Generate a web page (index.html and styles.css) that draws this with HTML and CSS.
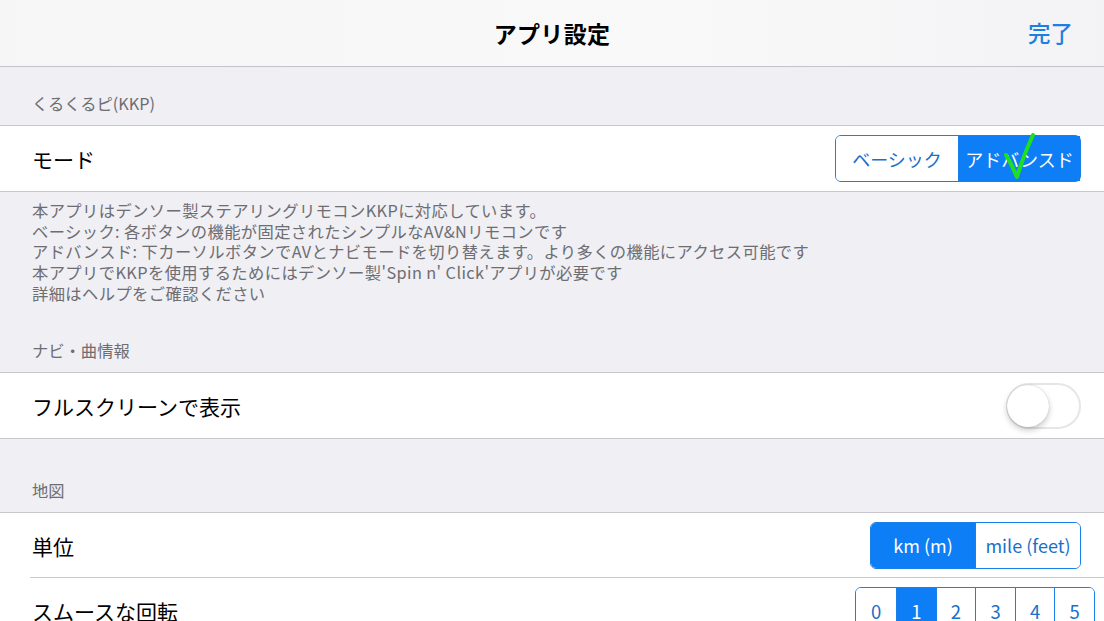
FILE: index.html
```html
<!DOCTYPE html>
<html lang="ja">
<head>
<meta charset="utf-8">
<title>アプリ設定</title>
<link rel="stylesheet" href="styles.css">
</head>
<body>
<div class="screen">
  <header class="navbar">
    <div class="nav-title">アプリ設定</div>
    <div class="nav-done">完了</div>
  </header>

  <div class="sec-head h1">くるくるピ(KKP)</div>
  <div class="group">
    <div class="row">
      <div class="label">モード</div>
      <div class="seg seg-mode">
        <div class="seg-item">ベーシック</div>
        <div class="seg-item on">アドバンスド</div>
        <svg class="check" width="40" height="52" viewBox="0 0 40 52"><path d="M3 22 Q9 32 14 44 Q20 24 30 2" fill="none" stroke="#1ee01e" stroke-width="4" stroke-linecap="round" stroke-linejoin="round"/></svg>
      </div>
    </div>
  </div>
  <div class="sec-foot">
    <p>本アプリはデンソー製ステアリングリモコンKKPに対応しています。</p>
    <p>ベーシック: 各ボタンの機能が固定されたシンプルなAV&amp;Nリモコンです</p>
    <p>アドバンスド: 下カーソルボタンでAVとナビモードを切り替えます。より多くの機能にアクセス可能です</p>
    <p>本アプリでKKPを使用するためにはデンソー製'Spin n' Click'アプリが必要です</p>
    <p>詳細はヘルプをご確認ください</p>
  </div>

  <div class="sec-head h2">ナビ・曲情報</div>
  <div class="group">
    <div class="row">
      <div class="label">フルスクリーンで表示</div>
      <div class="toggle"><div class="knob"></div></div>
    </div>
  </div>

  <div class="sec-head h3">地図</div>
  <div class="group">
    <div class="row inset">
      <div class="label">単位</div>
      <div class="seg seg-unit">
        <div class="seg-item on">km (m)</div>
        <div class="seg-item">mile (feet)</div>
      </div>
    </div>
    <div class="row">
      <div class="label">スムースな回転</div>
      <div class="seg seg-num">
        <div class="seg-item">0</div>
        <div class="seg-item on">1</div>
        <div class="seg-item">2</div>
        <div class="seg-item">3</div>
        <div class="seg-item">4</div>
        <div class="seg-item">5</div>
      </div>
    </div>
  </div>
</div>
</body>
</html>
```
FILE: styles.css
```css
* { box-sizing: border-box; }
html, body { margin: 0; padding: 0; }
body {
  width: 1104px;
  height: 621px;
  overflow: hidden;
  background: #efeff4;
  font-family: "Noto Sans CJK JP", "Noto Sans", sans-serif;
  color: #000;
}
.screen { width: 1104px; }
.navbar {
  height: 67px;
  background: linear-gradient(90deg, #f6f6f6 0%, #f9f9f9 60%, #f3f3f6 100%);
  border-bottom: 1px solid #c4c4c8;
  display: flex;
  align-items: center;
  justify-content: center;
  position: relative;
}
.nav-title {
  font-size: 23px;
  font-weight: 700;
  letter-spacing: 0.3px;
}
.nav-done {
  position: absolute;
  right: 31px;
  top: 16px;
  font-size: 22.5px;
  color: #1d7fe0;
  font-weight: 500;
}
.sec-head {
  display: flex;
  align-items: flex-end;
  padding: 0 32px 10px;
  font-size: 16.3px;
  color: #6d6d72;
}
.h1 { height: 58px; }
.h2 { height: 69px; }
.h3 { height: 73px; }
.group {
  background: #fff;
  border-top: 1px solid #c8c7cc;
  border-bottom: 1px solid #c8c7cc;
}
.row {
  height: 65px;
  display: flex;
  align-items: center;
  justify-content: space-between;
  padding: 0 23px 0 32px;
  position: relative;
}
.row.inset::after {
  content: "";
  position: absolute;
  left: 30px;
  right: 0;
  bottom: 0;
  height: 1px;
  background: #c8c7cc;
}
.label { font-size: 21px; padding-top: 1px; }
.sec-foot {
  padding: 8px 32px 0;
  font-size: 16.3px;
  color: #6d6d72;
  line-height: 20.7px;
  letter-spacing: 0.4px;
  white-space: nowrap;
}
.sec-foot p { margin: 0; height: 20.7px; }
.seg {
  display: flex;
  border: 1.5px solid #1a7fe8;
  border-radius: 6px;
  position: relative;
}
.seg-item {
  display: flex;
  align-items: center;
  justify-content: center;
  color: #1a6fc8;
  font-size: 18px;
  background: #fff;
}
.seg-item + .seg-item { border-left: 1.5px solid #1a7fe8; }
.seg-item.on { background: #0d7ef5; color: #fff; }
.seg-item:first-child { border-radius: 5px 0 0 5px; }
.seg-item:last-child { border-radius: 0 5px 5px 0; }
.seg-mode { height: 47px; }
.seg-mode .seg-item { width: 122px; }
.seg-unit { height: 47px; margin-top: -1px; }
.seg-unit .seg-item:first-child { width: 104px; }
.seg-unit .seg-item:last-child { width: 105px; }
.seg-num { height: 47px; align-self: flex-start; margin-top: 9px; margin-right: -14px; }
.seg-num .seg-item { width: 39.6px; font-size: 18.5px; }
.check {
  position: absolute;
  left: 167px;
  top: -3px;
}
.toggle {
  width: 75px;
  height: 46px;
  border-radius: 23px;
  border: 2px solid #e6e6e6;
  background: #fff;
  position: relative;
}
.knob {
  position: absolute;
  left: -1px;
  top: 0px;
  width: 42px;
  height: 42px;
  border-radius: 50%;
  background: #fff;
  box-shadow: 0 3px 6px rgba(0,0,0,0.22), 0 0 1px rgba(0,0,0,0.25);
}
```
